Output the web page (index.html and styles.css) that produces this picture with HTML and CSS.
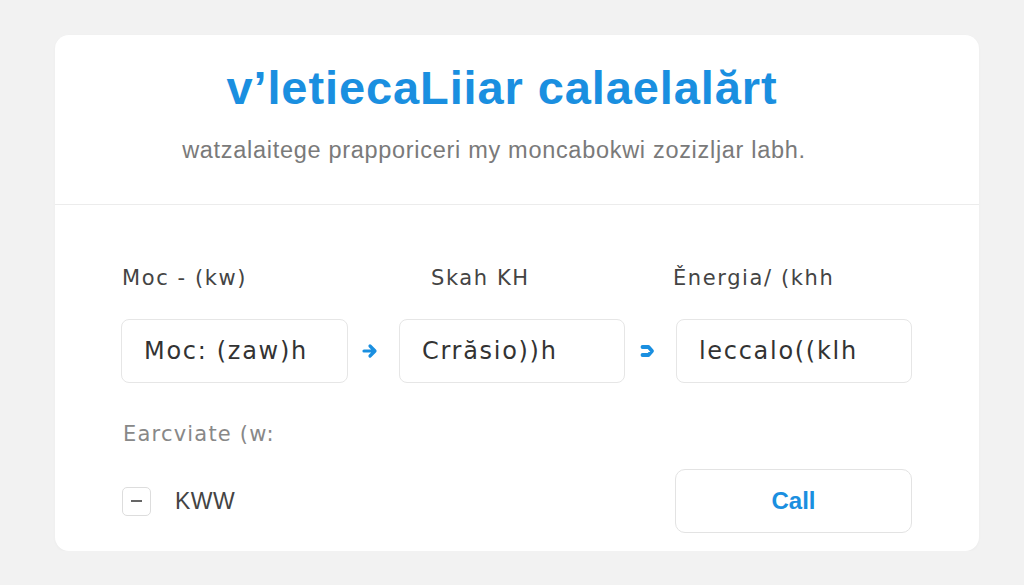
FILE: index.html
```html
<!DOCTYPE html>
<html lang="en">
  <head>
    <meta charset="UTF-8" />
    <meta name="viewport" content="width=device-width, initial-scale=1.0" />
    <title>Calculator</title>
    <link rel="stylesheet" href="styles.css">
  </head>
  <body>
    <div class="card">
      <div class="card-head">
        <h1 class="title">v&#8217;letiecaLiiar calaelalărt</h1>
        <p class="subtitle">watzalaitege prapporiceri my moncabokwi zozizljar labh.</p>
      </div>
      <div class="card-body">
        <div class="calc-grid">
          <div class="label">Moc - (kw)</div>
          <div></div>
          <div class="label label-mid">Skah KH</div>
          <div></div>
          <div class="label label-end">Ěnergia/ (khh</div>

          <div class="field">Moc: (zaw)h</div>
          <div class="arrow">
            <svg width="18" height="16" viewBox="0 0 18 16"><path d="M2 8h9M8 3l5 5-5 5" fill="none" stroke="#1a8fe0" stroke-width="3.2" stroke-linecap="round" stroke-linejoin="round"/></svg>
          </div>
          <div class="field">Crrăsio))h</div>
          <div class="arrow">
            <svg width="18" height="16" viewBox="0 0 18 16"><path d="M3.5 4h6l3.5 4-3.5 4h-6" fill="none" stroke="#1a8fe0" stroke-width="3.8" stroke-linecap="round" stroke-linejoin="round"/></svg>
          </div>
          <div class="field field-wide">leccalo((klh</div>
        </div>

        <div class="label label-muted">Earcviate (w:</div>

        <div class="bottom-row">
          <div class="unit">
            <span class="check"><span class="dash"></span></span>
            <span class="unit-text">KWW</span>
          </div>
          <button class="call-btn">Call</button>
        </div>
      </div>
    </div>
  </body>
</html>
```

FILE: styles.css
```css
body {
  margin: 0;
  background: #f2f2f2;
  font-family: "DejaVu Sans", "Liberation Sans", sans-serif;
}

.card {
  margin: 35px 45px 0 55px;
  height: 516px;
  background: #fff;
  border-radius: 14px;
  box-shadow: 0 1px 3px rgba(0, 0, 0, 0.03);
}

.card-head {
  height: 169px;
  border-bottom: 1px solid #ececec;
  text-align: center;
}

.title {
  margin: 0;
  padding-top: 25px;
  padding-right: 30px;
  font-family: "Liberation Sans", sans-serif;
  font-size: 47px;
  font-weight: bold;
  color: #1a8fe0;
  line-height: 56px;
  letter-spacing: 0.9px;
}

.subtitle {
  margin: 19px 0 0;
  padding-right: 46px;
  font-family: "Liberation Sans", sans-serif;
  font-size: 23.5px;
  color: #7a7a7a;
  line-height: 30px;
  letter-spacing: 0.7px;
}

.card-body {
  padding: 58px 0 0 66px;
}

.calc-grid {
  display: grid;
  grid-template-columns: 227px 51px 226px 51px 236px;
  row-gap: 26px;
  align-items: center;
}

.label {
  font-size: 21px;
  color: #444;
  line-height: 30px;
  padding-left: 1px;
  letter-spacing: 1.6px;
  white-space: nowrap;
}

.label-mid {
  padding-left: 32px;
}

.label-end {
  margin-left: -4px;
}

.label-muted {
  margin-top: 36px;
  color: #888;
  padding-left: 2px;
  letter-spacing: 1.2px;
}

.field {
  height: 62px;
  border: 1px solid #e6e6e6;
  border-radius: 8px;
  display: flex;
  align-items: center;
  padding-left: 22px;
  font-size: 24px;
  color: #333;
  letter-spacing: 1.7px;
}

.arrow {
  display: flex;
  justify-content: center;
  padding-right: 6px;
}

.bottom-row {
  display: flex;
  justify-content: space-between;
  align-items: center;
  width: 791px;
  margin-top: 20px;
}

.unit {
  display: flex;
  align-items: center;
  gap: 24px;
  padding-left: 1px;
}

.check {
  width: 27px;
  height: 27px;
  border: 1px solid #ddd;
  border-radius: 5px;
  display: flex;
  align-items: center;
  justify-content: center;
}

.dash {
  width: 11px;
  height: 2px;
  background: #666;
}

.unit-text {
  font-family: "Liberation Sans", sans-serif;
  font-size: 23px;
  color: #444;
  letter-spacing: 0.5px;
}

.call-btn {
  width: 237px;
  height: 64px;
  background: #fff;
  border: 1px solid #e3e3e3;
  border-radius: 10px;
  font-family: "Liberation Sans", sans-serif;
  font-size: 24px;
  font-weight: bold;
  color: #1a8fe0;
}
```
